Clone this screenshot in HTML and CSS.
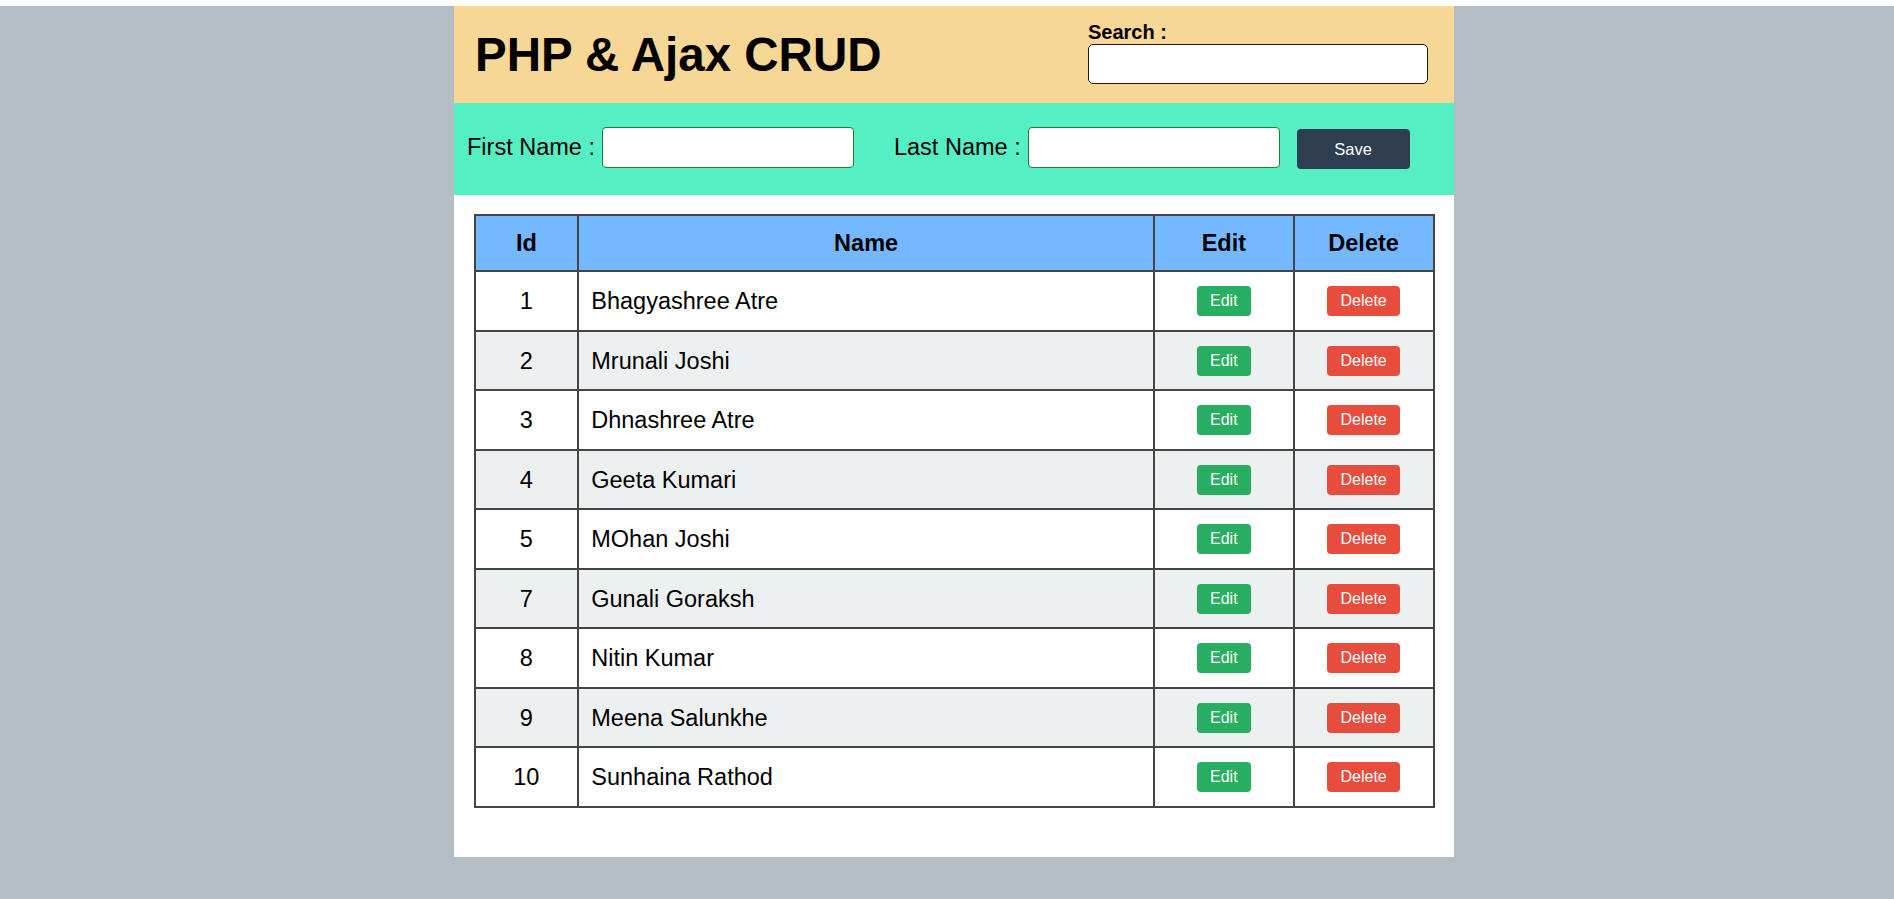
FILE: index.html
```html
<!DOCTYPE html>
<html lang="en">
<head>
<meta charset="utf-8">
<title>PHP &amp; Ajax CRUD</title>
<link rel="stylesheet" href="styles.css">
</head>
<body>
<div class="main">
  <header class="header">
    <h1 class="title">PHP &amp; Ajax CRUD</h1>
    <div class="search">
      <label class="search-label" for="search">Search :</label>
      <input class="search-input" type="text" id="search">
    </div>
  </header>
  <form class="add-form">
    <label class="form-label" for="fname">First Name :</label>
    <input class="form-input" type="text" id="fname">
    <label class="form-label form-label-last" for="lname">Last Name :</label>
    <input class="form-input" type="text" id="lname">
    <button class="save-btn" type="button">Save</button>
  </form>
  <div class="table-wrap">
    <table class="data">
      <colgroup>
        <col class="c-id"><col class="c-name"><col class="c-edit"><col class="c-del">
      </colgroup>
      <thead>
        <tr><th>Id</th><th>Name</th><th>Edit</th><th>Delete</th></tr>
      </thead>
      <tbody>
        <tr><td class="id">1</td><td>Bhagyashree Atre</td><td class="act"><button class="btn edit">Edit</button></td><td class="act"><button class="btn del">Delete</button></td></tr>
        <tr><td class="id">2</td><td>Mrunali Joshi</td><td class="act"><button class="btn edit">Edit</button></td><td class="act"><button class="btn del">Delete</button></td></tr>
        <tr><td class="id">3</td><td>Dhnashree Atre</td><td class="act"><button class="btn edit">Edit</button></td><td class="act"><button class="btn del">Delete</button></td></tr>
        <tr><td class="id">4</td><td>Geeta Kumari</td><td class="act"><button class="btn edit">Edit</button></td><td class="act"><button class="btn del">Delete</button></td></tr>
        <tr><td class="id">5</td><td>MOhan Joshi</td><td class="act"><button class="btn edit">Edit</button></td><td class="act"><button class="btn del">Delete</button></td></tr>
        <tr><td class="id">7</td><td>Gunali Goraksh</td><td class="act"><button class="btn edit">Edit</button></td><td class="act"><button class="btn del">Delete</button></td></tr>
        <tr><td class="id">8</td><td>Nitin Kumar</td><td class="act"><button class="btn edit">Edit</button></td><td class="act"><button class="btn del">Delete</button></td></tr>
        <tr><td class="id">9</td><td>Meena Salunkhe</td><td class="act"><button class="btn edit">Edit</button></td><td class="act"><button class="btn del">Delete</button></td></tr>
        <tr><td class="id">10</td><td>Sunhaina Rathod</td><td class="act"><button class="btn edit">Edit</button></td><td class="act"><button class="btn del">Delete</button></td></tr>
      </tbody>
    </table>
  </div>
</div>
</body>
</html>
```
FILE: styles.css
```css
html {
  background: #ffffff;
}
body {
  margin: 6px 0 0;
  padding: 0 0 0 14px;
  background: #b2bec3;
  min-height: calc(100vh - 6px);
  font-family: "Liberation Sans", Arial, sans-serif;
  color: #000;
}
.main {
  width: 1000px;
  margin: 0 auto;
  background: #fff;
}
.header {
  height: 97px;
  background: #f6d796;
  display: flex;
  justify-content: space-between;
  align-items: center;
  padding: 0 26px 0 21px;
  box-sizing: border-box;
}
.title {
  margin: 0;
  font-size: 47.5px;
  font-weight: bold;
  line-height: 54px;
}
.search {
  align-self: flex-start;
  padding-top: 15px;
  display: flex;
  flex-direction: column;
}
.search-label {
  font-size: 20px;
  font-weight: bold;
  line-height: 23px;
}
.search-input {
  width: 340px;
  height: 40px;
  box-sizing: border-box;
  border: 1px solid #1a1a1a;
  border-radius: 5px;
  margin: 0;
  background: #fff;
}
.add-form {
  height: 92px;
  margin: 0;
  background: #55efc4;
  display: flex;
  align-items: center;
  padding-left: 13px;
  padding-bottom: 4px;
  box-sizing: border-box;
}
.form-label {
  font-size: 23.5px;
  margin-right: 7px;
}
.form-label-last {
  margin-left: 40px;
}
.form-input {
  width: 252px;
  height: 41px;
  box-sizing: border-box;
  border: 1px solid #1d7f31;
  border-radius: 4px;
  margin: 0;
  background: #fff;
}
.save-btn {
  margin-left: 17px;
  margin-top: 4px;
  width: 113px;
  height: 40px;
  background: #2d3e50;
  color: #fff;
  border: none;
  border-radius: 4px;
  font-family: "Liberation Sans", Arial, sans-serif;
  font-size: 16.5px;
}
.table-wrap {
  padding: 19px 0 49px;
}
.data {
  width: 961px;
  margin: 0 auto;
  border-collapse: collapse;
  font-size: 23.5px;
}
.c-id { width: 104px; }
.c-name { width: 577px; }
.c-edit { width: 140px; }
.c-del { width: 140px; }
.data th {
  background: #74b9ff;
  border: 2px solid #444;
  padding: 12.2px 0;
  line-height: 30px;
  font-weight: bold;
  text-align: center;
}
.data td {
  border: 2px solid #444;
  padding: 14px 12px;
  line-height: 30px;
  text-align: left;
}
.data tbody tr:nth-child(even) td {
  padding-top: 13.5px;
  padding-bottom: 13.5px;
  background: #ecf0f1;
}
.data td.id,
.data td.act {
  text-align: center;
  padding-left: 0;
  padding-right: 0;
}
.btn {
  display: inline-block;
  vertical-align: top;
  height: 30px;
  padding: 0 13px;
  border: none;
  border-radius: 4px;
  color: #fff;
  font-family: "Liberation Sans", Arial, sans-serif;
  font-size: 16px;
  line-height: 30px;
}
.edit { background: #27ae60; }
.del { background: #e74c3c; }
```
